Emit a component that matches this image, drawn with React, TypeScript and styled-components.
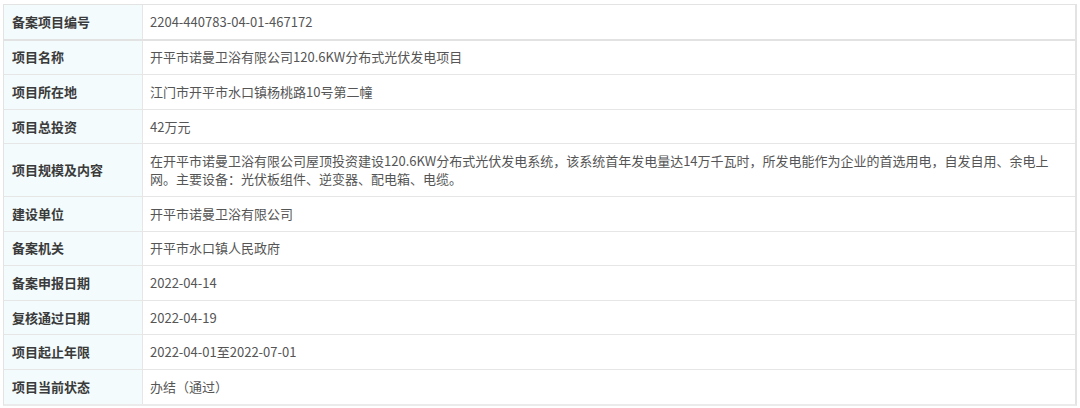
import React from 'react';
import styled, { createGlobalStyle } from 'styled-components';

const GlobalStyle = createGlobalStyle`
	body {
		margin: 0;
		background: #fff;
		font-family: 'Microsoft YaHei', 'Noto Sans CJK SC', 'Noto Sans', sans-serif;
	}
`;

const Page = styled.div`
	padding: 4px 3px 0 3px;
	width: 1074px;
`;

const Table = styled.div`
	border: 1px solid #e3e3e3;
	border-right-width: 2px;
	border-bottom: 2px solid #ebebeb;
`;

const Row = styled.div<{ $first?: boolean }>`
	display: grid;
	grid-template-columns: 139px 1fr;
	border-bottom: ${(p) => (p.$first ? '2px solid #e2e2e2' : '1px solid #e6e6e6')};

	&:last-child {
		border-bottom: none;
	}
`;

const Label = styled.div`
	display: flex;
	align-items: center;
	padding: 0 8px;
	background-color: #f3fbfc;
	border-right: 1px solid #e6e6e6;
	font-size: 13px;
	font-weight: bold;
	color: #3a3a3a;
	line-height: 18px;
`;

const Value = styled.div`
	display: flex;
	align-items: center;
	padding: 7.8px 15px 7.8px 7px;
	font-size: 13px;
	color: #555;
	line-height: 18px;
`;

const rows: [string, string][] = [
	['备案项目编号', '2204-440783-04-01-467172'],
	['项目名称', '开平市诺曼卫浴有限公司120.6KW分布式光伏发电项目'],
	['项目所在地', '江门市开平市水口镇杨桃路10号第二幢'],
	['项目总投资', '42万元'],
	[
		'项目规模及内容',
		'在开平市诺曼卫浴有限公司屋顶投资建设120.6KW分布式光伏发电系统，该系统首年发电量达14万千瓦时，所发电能作为企业的首选用电，自发自用、余电上网。主要设备：光伏板组件、逆变器、配电箱、电缆。',
	],
	['建设单位', '开平市诺曼卫浴有限公司'],
	['备案机关', '开平市水口镇人民政府'],
	['备案申报日期', '2022-04-14'],
	['复核通过日期', '2022-04-19'],
	['项目起止年限', '2022-04-01至2022-07-01'],
	['项目当前状态', '办结（通过）'],
];

function App() {
	return (
		<Page>
			<GlobalStyle />
			<Table>
				{rows.map(([label, value], i) => (
					<Row key={label} $first={i === 0}>
						<Label>{label}</Label>
						<Value>{value}</Value>
					</Row>
				))}
			</Table>
		</Page>
	);
}

export default App;
